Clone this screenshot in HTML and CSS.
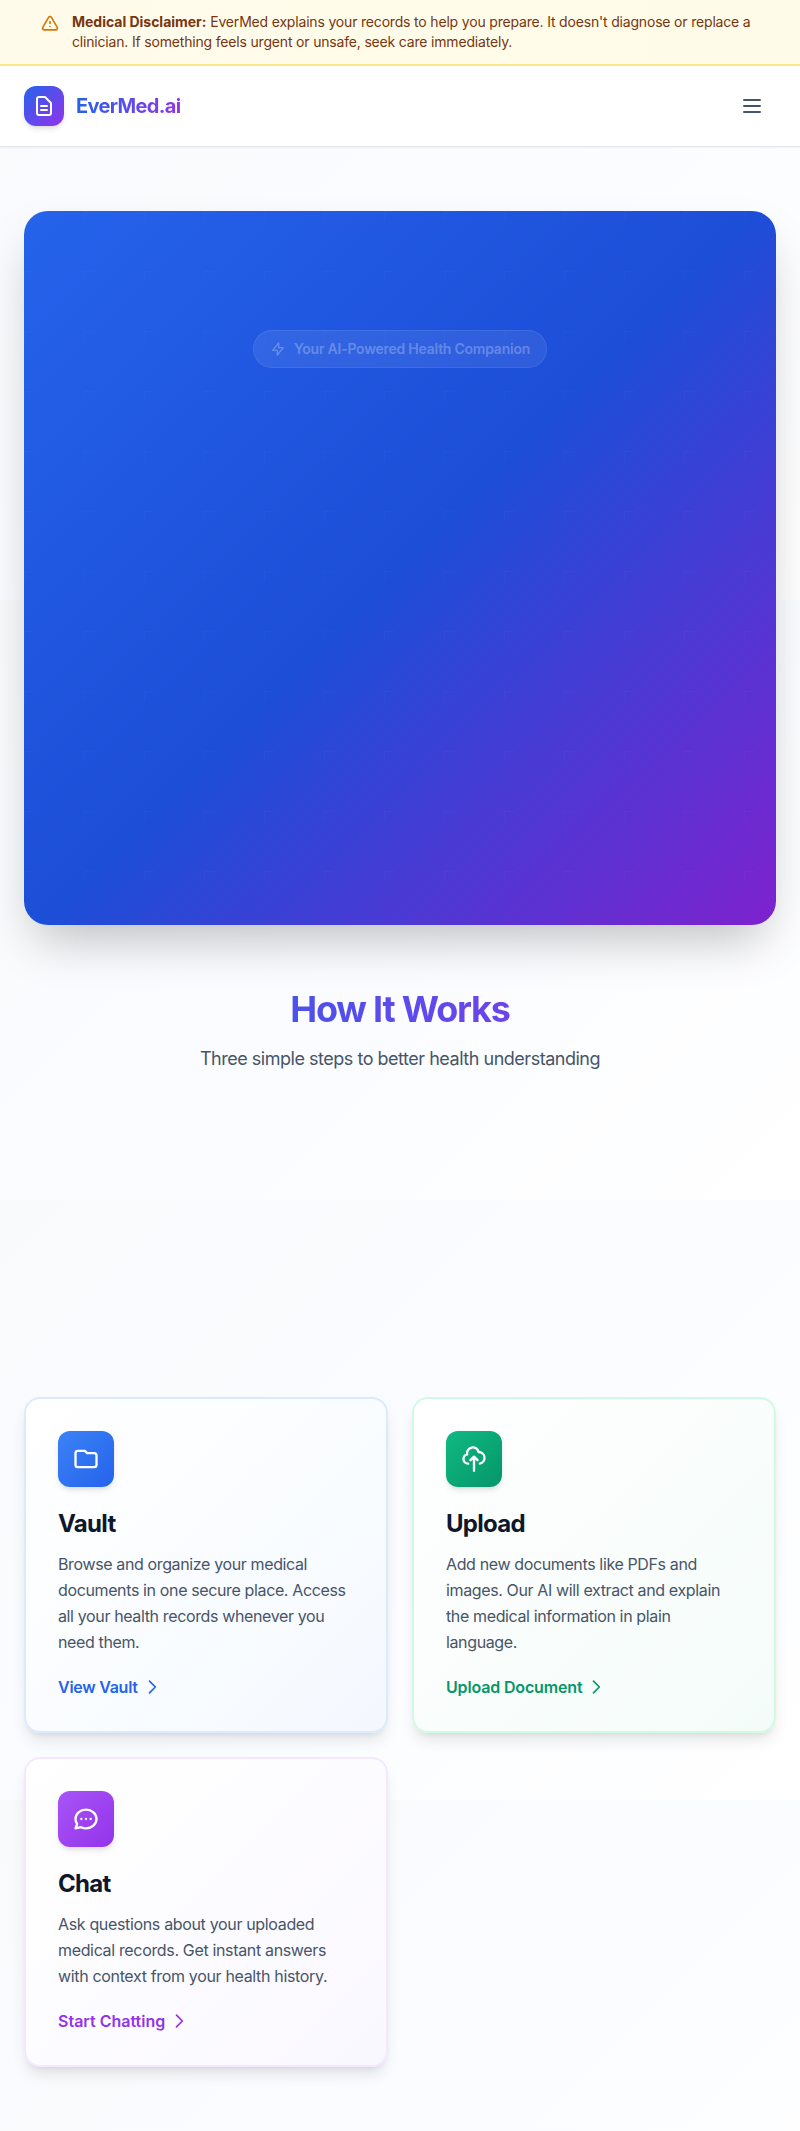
FILE: index.html
```html
<!DOCTYPE html>
<html lang="en">
<head>
<meta charset="utf-8">
<title>EverMed.ai</title>
<link rel="stylesheet" href="styles.css">
</head>
<body>
<div class="disclaimer">
  <svg class="disclaimer-icon" viewBox="0 0 24 24"><path d="M12 9v2m0 4h.01m-6.938 4h13.856c1.54 0 2.502-1.667 1.732-3L13.732 4c-.77-1.333-2.694-1.333-3.464 0L3.34 16c-.77 1.333.192 3 1.732 3z"/></svg>
  <p><strong>Medical Disclaimer:</strong> EverMed explains your records to help you prepare. It doesn't diagnose or replace a clinician. If something feels urgent or unsafe, seek care immediately.</p>
</div>
<header class="header">
  <a class="brand">
    <span class="brand-mark"><svg viewBox="0 0 24 24"><path d="M9 12h6m-6 4h6m2 5H7a2 2 0 01-2-2V5a2 2 0 012-2h5.586a1 1 0 01.707.293l5.414 5.414a1 1 0 01.293.707V19a2 2 0 01-2 2z"/></svg></span>
    <span class="brand-name">EverMed.ai</span>
  </a>
  <button class="menu" aria-label="Menu"><svg viewBox="0 0 24 24"><path d="M4 6h16M4 12h16M4 18h16"/></svg></button>
</header>
<main class="main">
  <section class="hero">
    <div class="pill">
      <svg viewBox="0 0 24 24"><path d="M13 10V3L4 14h7v7l9-11h-7z"/></svg>
      <span>Your AI-Powered Health Companion</span>
    </div>
  </section>
  <section class="how">
    <h2>How It Works</h2>
    <p>Three simple steps to better health understanding</p>
  </section>
  <section class="cards">
    <article class="card vault">
      <span class="card-icon"><svg viewBox="0 0 24 24"><path d="M3 7v10a2 2 0 002 2h14a2 2 0 002-2V9a2 2 0 00-2-2h-6l-2-2H5a2 2 0 00-2 2z"/></svg></span>
      <h3>Vault</h3>
      <p>Browse and organize your medical documents in one secure place. Access all your health records whenever you need them.</p>
      <a>View Vault <svg viewBox="0 0 24 24"><path d="M9 5l7 7-7 7"/></svg></a>
    </article>
    <article class="card upload">
      <span class="card-icon"><svg viewBox="0 0 24 24"><path d="M7 16a4 4 0 01-.88-7.903A5 5 0 1115.9 6L16 6a5 5 0 011 9.9M15 13l-3-3m0 0l-3 3m3-3v12"/></svg></span>
      <h3>Upload</h3>
      <p>Add new documents like PDFs and images. Our AI will extract and explain the medical information in plain language.</p>
      <a>Upload Document <svg viewBox="0 0 24 24"><path d="M9 5l7 7-7 7"/></svg></a>
    </article>
    <article class="card chat">
      <span class="card-icon"><svg viewBox="0 0 24 24"><path d="M8 12h.01M12 12h.01M16 12h.01M21 12c0 4.418-4.03 8-9 8a9.863 9.863 0 01-4.255-.949L3 20l1.395-3.72C3.512 15.042 3 13.574 3 12c0-4.418 4.03-8 9-8s9 3.582 9 8z"/></svg></span>
      <h3>Chat</h3>
      <p>Ask questions about your uploaded medical records. Get instant answers with context from your health history.</p>
      <a>Start Chatting <svg viewBox="0 0 24 24"><path d="M9 5l7 7-7 7"/></svg></a>
    </article>
  </section>
</main>
</body>
</html>
```

FILE: styles.css
```css
* { box-sizing: border-box; margin: 0; padding: 0; }
html { background: #fafcff linear-gradient(135deg, #f8fafc 0%, #fafcff 50%, #fff 100%) 0 0 / 100% 600px; }
body { font-family: Inter, sans-serif; font-size: 16px; color: #0f172a; }
svg { display: block; fill: none; stroke: currentColor; stroke-width: 2; stroke-linecap: round; stroke-linejoin: round; }

.disclaimer { display: flex; gap: 12px; height: 66px; padding: 12px 40px; background: linear-gradient(90deg, #fffbeb, #fefce8); border-bottom: 2px solid #fde68a; color: #78350f; font-size: 14px; line-height: 20px; letter-spacing: -0.18px; }
.disclaimer-icon { flex: none; width: 20px; height: 20px; margin-top: 2px; color: #d97706; }
.disclaimer strong { font-weight: 700; letter-spacing: -0.02px; }

.header { display: flex; align-items: center; justify-content: space-between; height: 81px; padding: 0 24px; background: #fff; border-bottom: 1px solid #e2e8f0; box-shadow: 0 1px 2px rgba(0, 0, 0, .05); }
.brand { display: flex; align-items: center; gap: 12px; }
.brand-mark { display: grid; place-items: center; width: 40px; height: 40px; border-radius: 12px; background: linear-gradient(135deg, #2563eb, #9333ea); color: #fff; box-shadow: 0 4px 6px -1px rgba(0, 0, 0, .1), 0 2px 4px -2px rgba(0, 0, 0, .1); }
.brand-mark svg { width: 24px; height: 24px; }
.brand-name { font-size: 20px; line-height: 28px; font-weight: 700; letter-spacing: -0.64px; color: transparent; background: linear-gradient(90deg, #2563eb, #9333ea); -webkit-background-clip: text; background-clip: text; }
.menu { padding: 12px; border: 0; background: none; color: #475569; }
.menu svg { width: 24px; height: 24px; }

.main { padding: 64px 24px; }
.hero {
  display: flex; justify-content: center; align-items: flex-start; height: 714px; padding-top: 119px; border-radius: 24px;
  background:
    url("data:image/svg+xml,%3Csvg xmlns='http://www.w3.org/2000/svg' width='60' height='60'%3E%3Cpath d='M10 0H0V10' fill='none' stroke='white' stroke-opacity='.035'/%3E%3C/svg%3E"),
    linear-gradient(135deg, #2563eb 0%, #1d4ed8 50%, #7e22ce 100%);
  box-shadow: 0 25px 50px -12px rgba(0, 0, 0, .25);
}
.pill { display: flex; align-items: center; gap: 8px; height: 38px; padding: 0 16px; border: 1px solid rgba(255, 255, 255, .08); border-radius: 19px; background: rgba(255, 255, 255, .08); color: rgba(255, 255, 255, .27); font-size: 14px; line-height: 20px; font-weight: 600; letter-spacing: -0.24px; }
.pill svg { width: 16px; height: 16px; }

.how { height: 472px; padding-top: 64px; text-align: center; }
.how h2 { font-size: 36px; line-height: 40px; font-weight: 700; letter-spacing: -1.2px; color: transparent; background: linear-gradient(90deg, #2563eb, #9333ea); -webkit-background-clip: text; background-clip: text; }
.how p { margin-top: 16px; color: #475569; font-size: 18px; line-height: 28px; letter-spacing: -0.48px; }

.cards { display: grid; grid-template-columns: 1fr 1fr; gap: 24px; }
.card { padding: 32px; border: 2px solid; border-radius: 16px; box-shadow: 0 10px 15px -3px rgba(0, 0, 0, .1), 0 4px 6px -4px rgba(0, 0, 0, .1); }
.card-icon { display: grid; place-items: center; width: 56px; height: 56px; margin-bottom: 21px; border-radius: 12px; color: #fff; box-shadow: 0 4px 6px -1px rgba(0, 0, 0, .1), 0 2px 4px -2px rgba(0, 0, 0, .1); }
.card-icon svg { width: 28px; height: 28px; }
.card h3 { margin-bottom: 11px; font-size: 24px; line-height: 32px; font-weight: 700; letter-spacing: -0.7px; }
.card p { margin-bottom: 20px; color: #475569; line-height: 26px; letter-spacing: -0.37px; }
.card a { display: flex; align-items: center; gap: 4px; line-height: 24px; font-weight: 600; letter-spacing: -0.16px; }
.card a svg { width: 20px; height: 20px; }
.vault { border-color: #dbeafe; background: linear-gradient(135deg, #fff, #f9fcff 60%, #f4f7fe); }
.vault .card-icon { background: linear-gradient(135deg, #3b82f6, #2563eb); }
.vault a { color: #2563eb; letter-spacing: -0.26px; }
.upload { border-color: #d1fae5; background: linear-gradient(135deg, #fff, #f4fcf9); }
.upload .card-icon { background: linear-gradient(135deg, #10b981, #059669); }
.upload a { color: #059669; }
.chat { border-color: #f3e8ff; background: linear-gradient(135deg, #fff, #faf8ff); }
.chat .card-icon { background: linear-gradient(135deg, #a855f7, #9333ea); }
.chat a { color: #9333ea; letter-spacing: 0; }
.chat p { letter-spacing: -0.34px; }
```
